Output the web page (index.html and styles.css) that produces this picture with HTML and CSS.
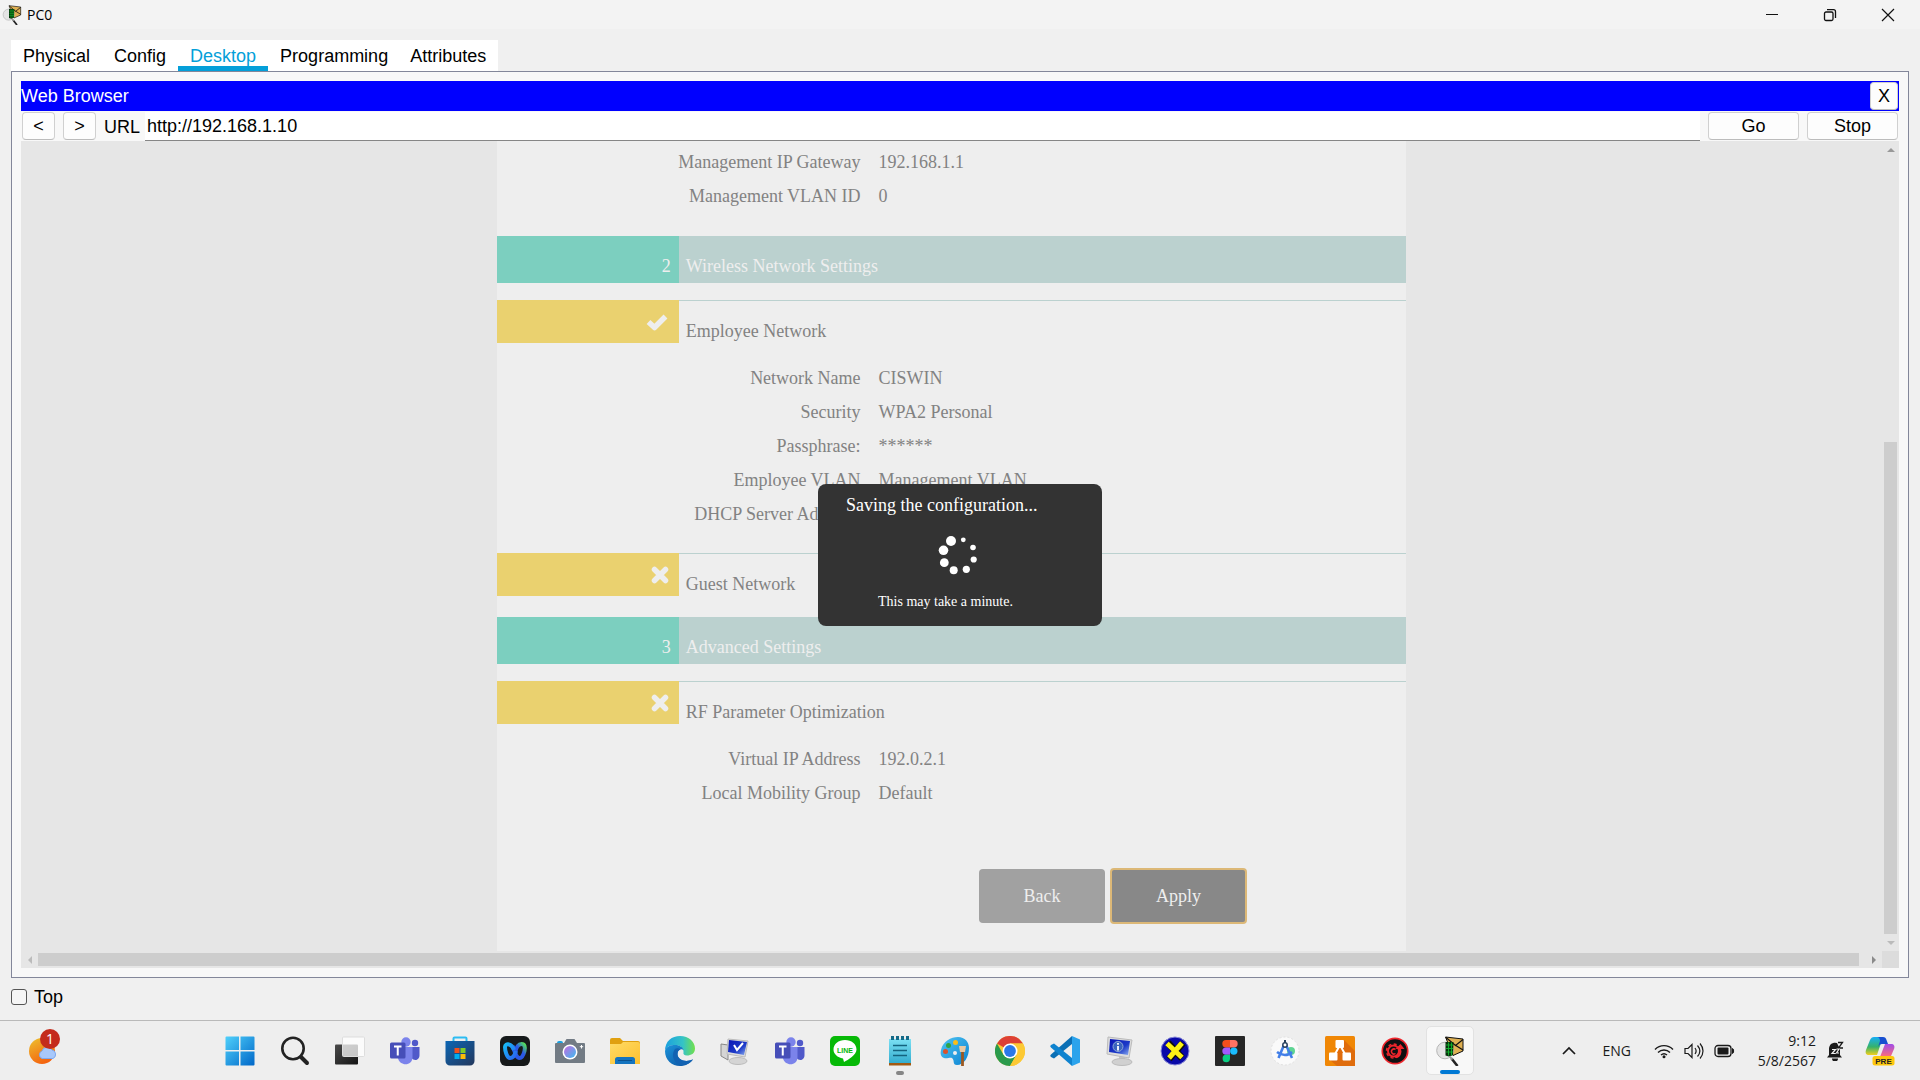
FILE: index.html
```html
<!DOCTYPE html>
<html lang="en">
<head>
<meta charset="utf-8">
<title>PC0</title>
<link rel="stylesheet" href="styles.css">
</head>
<body>
<svg class="defs" aria-hidden="true">
  <defs>
    <linearGradient id="win" x1="0" y1="0" x2="1" y2="1"><stop offset="0" stop-color="#4fd0fb"/><stop offset="1" stop-color="#0067c8"/></linearGradient>
    <linearGradient id="sun" x1="0" y1="0" x2="0.5" y2="1"><stop offset="0" stop-color="#edc22f"/><stop offset="1" stop-color="#f4640f"/></linearGradient>
    <linearGradient id="dark" x1="0" y1="0" x2="1" y2="1"><stop offset="0" stop-color="#4a4a4a"/><stop offset="1" stop-color="#141414"/></linearGradient>
    <linearGradient id="store" x1="0" y1="0" x2="1" y2="1"><stop offset="0" stop-color="#0c66b4"/><stop offset="1" stop-color="#23375c"/></linearGradient>
    <linearGradient id="webexa" x1="0" y1="0" x2="1" y2="1"><stop offset="0" stop-color="#18b8f5"/><stop offset="1" stop-color="#2a62f0"/></linearGradient>
    <linearGradient id="webexb" x1="1" y1="0" x2="0" y2="1"><stop offset="0" stop-color="#55e05a"/><stop offset="0.4" stop-color="#2a58e8"/><stop offset="1" stop-color="#2a58e8"/></linearGradient>
    <linearGradient id="lens" x1="0" y1="0" x2="1" y2="1"><stop offset="0" stop-color="#c56ae0"/><stop offset="1" stop-color="#3cbcf0"/></linearGradient>
    <linearGradient id="folder" x1="0" y1="0" x2="1" y2="1"><stop offset="0" stop-color="#ffdb66"/><stop offset="1" stop-color="#fdc02f"/></linearGradient>
    <linearGradient id="edgea" x1="0" y1="0" x2="1" y2="0"><stop offset="0" stop-color="#1aa0df"/><stop offset="0.6" stop-color="#35c3c6"/><stop offset="1" stop-color="#72e04a"/></linearGradient>
    <linearGradient id="edgeb" x1="0" y1="0" x2="1" y2="1"><stop offset="0" stop-color="#1b93da"/><stop offset="1" stop-color="#0c4f9e"/></linearGradient>
    <linearGradient id="screen" x1="0" y1="0" x2="1" y2="1"><stop offset="0" stop-color="#0a14b4"/><stop offset="0.6" stop-color="#1c3ac8"/><stop offset="1" stop-color="#8fb0f0"/></linearGradient>
    <linearGradient id="pad" x1="0" y1="0" x2="0" y2="1"><stop offset="0" stop-color="#7be0f4"/><stop offset="1" stop-color="#34add0"/></linearGradient>
    <linearGradient id="paint" x1="0" y1="0" x2="1" y2="1"><stop offset="0" stop-color="#4fc4f2"/><stop offset="1" stop-color="#0c83d2"/></linearGradient>
    <linearGradient id="copa" x1="0" y1="0" x2="0" y2="1"><stop offset="0" stop-color="#16aef5"/><stop offset="0.55" stop-color="#36b26a"/><stop offset="1" stop-color="#f3cf1c"/></linearGradient>
    <linearGradient id="copb" x1="0" y1="0" x2="0" y2="1"><stop offset="0" stop-color="#a04be8"/><stop offset="1" stop-color="#ff6f75"/></linearGradient>
    <symbol id="teams" viewBox="0 0 30 30">
      <circle cx="25" cy="7" r="3.2" fill="#5059c9"/><path d="M20 11h9.500v8c0 6-6 6-8 3z" fill="#5059c9"/>
      <circle cx="16" cy="6" r="4.700" fill="#7b83eb"/><path d="M8 11h14.500v10c0 9.500-13 9.500-14.500 1z" fill="#7b83eb"/>
      <rect x="0" y="6.500" width="15.500" height="16" rx="1.500" fill="#464eb8"/><path d="M4 10.500h7.500M7.750 10.500v9" stroke="#fff" stroke-width="2" fill="none"/>
    </symbol>
    <symbol id="tracer" viewBox="0 0 30 30">
      <path d="M10.500 1l17.500 2v12l-10 4.500z" fill="#dfb052" stroke="#111"/><path d="M11 1.500l9.500 8L28 3.500M20 9l8 5" fill="none" stroke="#111" stroke-width="1.200"/>
      <circle cx="10" cy="14.500" r="8.300" fill="#e4e4e4" stroke="#b5b5b5"/>
      <path d="M10.500 6h8l-.5 13-4 1.500-3.500-1z" fill="#05310a"/><path d="M11 9h7M11 12.500h7M11 16h7M13.500 6.500v13M16.500 6.500v13" stroke="#11b52d" stroke-width=".9"/>
      <path d="M16.500 22.500l6 7.500" stroke="#222" stroke-width="2.600"/><path d="M15 21l2.500 2.500" stroke="#999" stroke-width="2"/>
    </symbol>
    <symbol id="tick" viewBox="0 0 24 18"><path d="M3.500 9l6 5.500L20.500 3.500" fill="none" stroke="#eee" stroke-width="5.500" stroke-linejoin="round"/></symbol>
    <symbol id="cross" viewBox="0 0 18 18"><path d="M3.500 3.500l11 11M14.500 3.500l-11 11" fill="none" stroke="#eee" stroke-width="5.500" stroke-linecap="round"/></symbol>
  </defs>
</svg>

<header class="titlebar">
  <svg class="app-icon" width="20" height="20"><use href="#tracer"/></svg>
  <h1 class="title">PC0</h1>
  <div class="window-controls">
    <button type="button" aria-label="Minimize"><svg width="14" height="14" viewBox="0 0 14 14"><path d="M1 6.500h12" stroke="#111"/></svg></button>
    <button type="button" aria-label="Restore"><svg width="14" height="14" viewBox="0 0 14 14" fill="none" stroke="#111"><rect x="1.500" y="4" width="8.500" height="8.500" rx="1.500" stroke-width="1.300"/><path d="M4 1.700h6.500a2 2 0 0 1 2 2v6.300" stroke-width="1.300"/></svg></button>
    <button type="button" aria-label="Close"><svg width="14" height="14" viewBox="0 0 14 14"><path d="M1 1l12 12M13 1L1 13" stroke="#111" stroke-width="1.200"/></svg></button>
  </div>
</header>

<nav class="tabs">
  <a href="#physical">Physical</a>
  <a href="#config">Config</a>
  <a href="#desktop" class="active">Desktop</a>
  <a href="#programming">Programming</a>
  <a href="#attributes">Attributes</a>
</nav>

<main class="panel">
  <div class="browser-head"><h2>Web Browser</h2><button type="button" class="btn btn-x">X</button></div>
  <form class="toolbar">
    <button type="button" class="btn btn-nav">&lt;</button>
    <button type="button" class="btn btn-nav">&gt;</button>
    <label for="url">URL</label>
    <input id="url" type="text" value="http://192.168.1.10">
    <button type="button" class="btn btn-go">Go</button>
    <button type="button" class="btn btn-go">Stop</button>
  </form>

  <div class="viewport">
    <div class="page">
      <article class="sheet">
        <dl class="rows first">
          <dt>Management IP Gateway</dt><dd>192.168.1.1</dd>
          <dt>Management VLAN ID</dt><dd>0</dd>
        </dl>
        <h3 class="section"><span class="num">2</span><span class="name">Wireless Network Settings</span></h3>
        <h4 class="sub"><span class="mark"><svg width="24" height="18"><use href="#tick"/></svg></span><span class="name">Employee Network</span></h4>
        <dl class="rows">
          <dt>Network Name</dt><dd>CISWIN</dd>
          <dt>Security</dt><dd>WPA2 Personal</dd>
          <dt>Passphrase:</dt><dd>******</dd>
          <dt>Employee VLAN</dt><dd>Management VLAN</dd>
          <dt>DHCP Server Address:</dt><dd></dd>
        </dl>
        <h4 class="sub last"><span class="mark"><svg width="18" height="18"><use href="#cross"/></svg></span><span class="name">Guest Network</span></h4>
        <h3 class="section"><span class="num">3</span><span class="name">Advanced Settings</span></h3>
        <h4 class="sub"><span class="mark"><svg width="18" height="18"><use href="#cross"/></svg></span><span class="name">RF Parameter Optimization</span></h4>
        <dl class="rows">
          <dt>Virtual IP Address</dt><dd>192.0.2.1</dd>
          <dt>Local Mobility Group</dt><dd>Default</dd>
        </dl>
        <div class="actions">
          <button type="button" class="back">Back</button>
          <button type="button" class="apply">Apply</button>
        </div>
      </article>
    </div>
    <div class="vbar" aria-hidden="true"><i class="arrow up"></i><div class="vtrack"><div class="vthumb"></div></div><i class="arrow down"></i></div>
    <div class="hbar" aria-hidden="true"><i class="arrow left"></i><div class="hthumb"></div><i class="arrow right"></i></div>
    <div class="corner"></div>

    <div class="saving" role="status">
      <p class="saving-title">Saving the configuration...</p>
      <svg class="spinner" width="40" height="40" viewBox="0 0 40 40" fill="#fff">
        <circle cx="13" cy="6" r="5"/><circle cx="5.500" cy="15.300" r="4.800"/><circle cx="6.300" cy="27.700" r="4.400"/><circle cx="15.700" cy="35.300" r="4"/>
        <circle cx="28.300" cy="34.300" r="3.600"/><circle cx="35.700" cy="24.500" r="3.100"/><circle cx="35" cy="12.500" r="2.800"/><circle cx="25.300" cy="4.800" r="2.400"/>
      </svg>
      <p class="saving-note">This may take a minute.</p>
    </div>
  </div>
</main>

<div class="top-option"><input type="checkbox" id="top"><label for="top">Top</label></div>

<footer class="taskbar">
  <button type="button" class="widgets" aria-label="Weather">
    <svg width="34" height="36" viewBox="0 0 34 36"><circle cx="14" cy="22" r="13" fill="url(#sun)"/><path d="M14 29.500a4 4 0 0 1 0-7.500 5.500 5.500 0 0 1 10-1 4.500 4.500 0 0 1 1 8.500z" fill="#a8c8fb" stroke="#7fa8ee"/></svg>
    <span class="badge">1</span>
  </button>

  <div class="apps">
    <button type="button" aria-label="Start"><svg viewBox="0 0 30 30"><path d="M.5 1.500a1 1 0 0 1 1-1H14V14H.5zM15.500.5h13a1 1 0 0 1 1 1V14h-14zM.5 15.500H14v14H1.500a1 1 0 0 1-1-1zM15.500 15.500h14v13a1 1 0 0 1-1 1h-13z" fill="url(#win)"/></svg></button>
    <button type="button" aria-label="Search"><svg viewBox="0 0 30 30" fill="none" stroke="#222"><circle cx="13" cy="12.500" r="10.700" stroke-width="2.600"/><path d="M21 21l6 6" stroke-width="4" stroke-linecap="round"/></svg></button>
    <button type="button" aria-label="Task view"><svg viewBox="0 0 30 30"><rect x="0" y="8.500" width="23" height="20" rx="1" fill="url(#dark)"/><rect x="7.500" y="1" width="22" height="19.500" rx="1" fill="#fff" fill-opacity=".75" stroke="#ddd"/></svg></button>
    <button type="button" aria-label="Teams"><svg><use href="#teams"/></svg></button>
    <button type="button" aria-label="Store"><svg viewBox="0 0 30 30"><path d="M8.500 6V2.500a1 1 0 0 1 1-1h11a1 1 0 0 1 1 1V6" fill="none" stroke="#2cbcf2" stroke-width="2"/><path d="M.5 5h29v20a4.500 4.500 0 0 1-4.500 4.500H5A4.500 4.500 0 0 1 .5 25z" fill="url(#store)"/><path d="M9.500 12h5v5h-5z" fill="#f1511b"/><path d="M15.500 12h5v5h-5z" fill="#80cc28"/><path d="M9.500 18h5v5h-5z" fill="#00adef"/><path d="M15.500 18h5v5h-5z" fill="#fbbc09"/></svg></button>
    <button type="button" aria-label="Webex"><svg viewBox="0 0 30 30" fill="none"><rect width="30" height="30" rx="6" fill="#16191a"/><path d="M15 17c1-5 3-9 6.500-9 3 0 4 3 3 7-1 4-2.500 7-5 7-4 0-5-8-7-12" stroke="url(#webexb)" stroke-width="4"/><path d="M16 15c-1 4-3 7-6 7s-5-7-5-11c0-2 2-3 4-2.500 3 .5 4 3 5 5.500" stroke="url(#webexa)" stroke-width="4"/></svg></button>
    <button type="button" aria-label="Camera"><svg viewBox="0 0 30 30"><rect x="2" y="5" width="6" height="5" rx="2" fill="#18a0e0"/><path d="M1 7h8l2.500-4h8L22 7h7a1 1 0 0 1 1 1v18a1 1 0 0 1-1 1H1a1 1 0 0 1-1-1V8a1 1 0 0 1 1-1z" fill="#727b84"/><circle cx="15" cy="16" r="7.500" fill="#fff"/><circle cx="15" cy="16" r="6" fill="url(#lens)"/><path d="M26.500 9v3.500M24.800 10.700h3.400" stroke="#fff"/></svg></button>
    <button type="button" aria-label="File Explorer"><svg viewBox="0 0 30 30"><path d="M0 4a2 2 0 0 1 2-2h8l3 3h15a2 2 0 0 1 2 2v5H0z" fill="#e0a010"/><path d="M0 8h11l2-2h15a2 2 0 0 1 2 2v20H0z" fill="url(#folder)"/><path d="M5 28v-4.500A2.500 2.500 0 0 1 7.500 21h15a2.500 2.500 0 0 1 2.500 2.500V28z" fill="#1474bf"/><path d="M8 24.500h14" stroke="#0b528f"/></svg></button>
    <button type="button" aria-label="Edge"><svg viewBox="0 0 30 30"><path d="M0 15C0 5 7 0 15 0c9 0 15 6 15 12.500 0 5-4 7-8 7-3 0-4-1.500-3.500-3C19 12 15 9 10 9 5 9 1 11 0 15z" fill="url(#edgea)"/><path d="M0 15C1 10 6 9 10 9c4 0 8 2 8.500 5-2-1.500-6-.5-6 4 0 5 6 8 12 6.500 2-.5 3-1 3.500-1C24 28 20 30 15 30 7 30 0 24 0 15z" fill="url(#edgeb)"/><path d="M10 13c-5 7 0 15.500 7.500 16.500C22 29 26 26.500 28 23.500c-7 3-15 1-15.500-5C12.300 16 13.500 14 15.500 13.500c-2-1.500-4-1.500-5.500-.5z" fill="#1262b2"/></svg></button>
    <button type="button" aria-label="Remote display"><svg viewBox="0 0 30 30"><path d="M1 8l7 1v15l-7-4z" fill="#d5d5d5" stroke="#888"/><path d="M8 3l20 2-3 16-18-3z" fill="#ddd" stroke="#bbb"/><path d="M9 4l18 2-3 13-16-3z" fill="url(#screen)"/><path d="M14 9l3 5 6-7" stroke="#fff" stroke-width="2" fill="none"/><ellipse cx="18" cy="25" rx="9" ry="3.500" fill="#d4d4d4" stroke="#bbb"/></svg></button>
    <button type="button" aria-label="Teams chat"><svg><use href="#teams"/></svg></button>
    <button type="button" aria-label="LINE"><svg viewBox="0 0 30 30"><rect width="30" height="30" rx="5" fill="#06b907"/><path d="M15 4C8.500 4 3.500 8 3.500 13.500c0 4.500 4 8 9.500 9l1 3.500c4-2 12.500-7 12.500-12.500C26.500 8 21.500 4 15 4z" fill="#fff"/><text x="15" y="16.500" text-anchor="middle" class="line-text">LINE</text></svg></button>
    <button type="button" aria-label="Notepad" class="running"><svg viewBox="0 0 30 30"><path d="M4 3h22v24H4z" fill="url(#pad)"/><path d="M4 27h22v2.500H4z" fill="#a25a13"/><path d="M8 9.500h14M8 14.500h14M8 19.500h14" stroke="#14637f" stroke-width="1.700"/><path d="M7.500 0v4M12.500 0v4M17.500 0v4M22.500 0v4" stroke="#146a88" stroke-width="3"/></svg></button>
    <button type="button" aria-label="Paint"><svg viewBox="0 0 30 30"><path d="M1 14C3 5 11 1 18 1c7 0 11 5 11 11 0 9-5 17-12 17-5 0-2-5-5-7-2-1-5 1-8 0-3-1-4-4-3-8z" fill="url(#paint)"/><circle cx="5.500" cy="15.500" r="2.500" fill="#d9532c"/><circle cx="8.500" cy="9.500" r="2.500" fill="#2fa344"/><circle cx="15.500" cy="6.500" r="2.500" fill="#fbbd1a"/><circle cx="15" cy="17" r="2" fill="#eee"/><path d="M22.500 14v16" stroke="#9b5922" stroke-width="2.800"/><path d="M19 10h7l-1 6h-5z" fill="#e9c9a4"/></svg></button>
    <button type="button" aria-label="Chrome"><svg viewBox="0 0 30 30"><circle cx="15" cy="15" r="15" fill="#fcc934"/><path d="M15 15L2 7.500A15 15 0 0 1 28 7.500H15z" fill="#dd4035"/><path d="M2 7.500A15 15 0 0 0 15 30l6.500-11.200-13 0z" fill="#2a9a4c"/><path d="M15 7.500h13A15 15 0 0 1 15 30l6.500-11.200z" fill="#fcc934"/><circle cx="15" cy="15" r="7.500" fill="#fff"/><circle cx="15" cy="15" r="5.900" fill="#2b78e8"/></svg></button>
    <button type="button" aria-label="Visual Studio Code"><svg viewBox="0 0 30 30"><path d="M22 0l8 3.500v23L22 30z" fill="#2ba3ec"/><path d="M22 0v8L4 22.500 1 21c-1-1-1-1.500 0-2.500z" fill="#0a6fb5"/><path d="M22 30v-8L4 7.500 1 9c-1 1-1 1.500 0 2.500z" fill="#0f83cf"/></svg></button>
    <button type="button" aria-label="System information"><svg viewBox="0 0 30 30"><path d="M14 20h6v6h-6z" fill="#c5c5c5"/><ellipse cx="17" cy="26" rx="10" ry="3.500" fill="#d0d0d0" stroke="#bbb"/><path d="M3 1l24 3-3 18-22-4z" fill="#ddd" stroke="#bbb"/><path d="M5 3l20 2-2 14-19-3z" fill="url(#screen)"/><circle cx="13" cy="10.500" r="5" fill="#3b65bd" stroke="#8ea8d8"/><path d="M13 7v1.800M13 10v4.500" stroke="#fff" stroke-width="1.800"/></svg></button>
    <button type="button" aria-label="X tool"><svg viewBox="0 0 30 30"><circle cx="15" cy="15" r="14" fill="#0909a8" stroke="#8a8ad8"/><path d="M8 7l14 15M23 7L9 23" stroke="#111" stroke-width="7"/><path d="M7 7.500l15 14M22 7L9 22" stroke="#fbf116" stroke-width="5"/></svg></button>
    <button type="button" aria-label="Figma"><svg viewBox="0 0 30 30"><rect width="30" height="30" rx="1" fill="#262626"/><path d="M15 4h-4a3.700 3.700 0 0 0 0 7.400h4z" fill="#f24e1e"/><path d="M15 4h4a3.700 3.700 0 0 1 0 7.400h-4z" fill="#ff7262"/><path d="M15 11.400h-4a3.700 3.700 0 0 0 0 7.400h4z" fill="#a259ff"/><circle cx="18.800" cy="15.100" r="3.700" fill="#1abcfe"/><path d="M15 18.800h-4a3.700 3.700 0 1 0 4 3.700z" fill="#0acf83"/></svg></button>
    <button type="button" aria-label="Android Studio"><svg viewBox="0 0 30 30"><circle cx="15" cy="15" r="14" fill="#fafafa" stroke="#e0e0e0" stroke-dasharray="2 2"/><circle cx="21" cy="15" r="4" fill="#5ed493"/><path d="M14 9L8.500 22M16 9l6 13M7 16c5 4 11 4 15 0" stroke="#427fe8" stroke-width="2.600" fill="none"/><circle cx="15" cy="9" r="2.200" fill="#fff" stroke="#28405c" stroke-width="1.500"/><path d="M15 4v3" stroke="#28405c" stroke-width="2"/></svg></button>
    <button type="button" aria-label="Diagrams"><svg viewBox="0 0 30 30"><rect width="30" height="30" rx="1.500" fill="#f08705"/><path d="M19 4l11 11v15H12l-7-6 9-12z" fill="#df6c0c"/><path d="M15 9L9 20M15 9l6 11" stroke="#fff" stroke-width="2"/><g fill="#fff"><rect x="10.500" y="4" width="8.500" height="8" rx="1"/><rect x="4" y="16.500" width="8.500" height="8" rx="1"/><rect x="17.500" y="16.500" width="8.500" height="8" rx="1"/></g></svg></button>
    <button type="button" aria-label="Control center"><svg viewBox="0 0 30 30"><circle cx="15" cy="15" r="12.700" fill="#101112" stroke="#f0262d" stroke-width="1.700"/><circle cx="13.500" cy="15" r="5.500" fill="none" stroke="#f0262d" stroke-width="2"/><circle cx="13.500" cy="15" r="7" fill="none" stroke="#f0262d" stroke-width="1.500" stroke-dasharray="3 2.500"/><path d="M15.500 13.500a2.500 2.500 0 1 0 0 4" fill="none" stroke="#f0262d" stroke-width="1.500"/><path d="M15 22c6 0 7-5 6-9l3.500 0-4-5-5 5h3c1 4 0 6-3 7z" fill="#f0262d"/></svg></button>
    <button type="button" aria-label="Packet Tracer" class="current"><svg><use href="#tracer"/></svg></button>
  </div>

  <div class="tray">
    <button type="button" aria-label="Show hidden icons"><svg width="16" height="10" viewBox="0 0 16 10"><path d="M2 8l6-6 6 6" fill="none" stroke="#1a1a1a" stroke-width="1.700"/></svg></button>
    <span class="lang">ENG</span>
    <div class="status">
      <svg width="20" height="16" viewBox="0 0 20 16" fill="none" stroke="#1a1a1a" stroke-width="1.400" aria-label="Wi-Fi"><path d="M1 6.500a12.500 12.500 0 0 1 18 0M4 9.500a8.500 8.500 0 0 1 12 0M7 12a4.500 4.500 0 0 1 6 0"/><circle cx="10" cy="13.700" r="1.500" fill="#1a1a1a" stroke="none"/></svg>
      <svg width="20" height="18" viewBox="0 0 20 18" fill="none" stroke="#1a1a1a" stroke-width="1.200" aria-label="Volume"><path d="M1 6.500h3L8 2.500v13l-4-4H1z"/><path d="M11 6c1.500 2 1.500 4 0 6M13.500 3.500c3 3.500 3 7.500 0 11M16 1.500c4 4.500 4 10.500 0 15"/></svg>
      <svg width="21" height="14" viewBox="0 0 21 14" aria-label="Battery"><rect x="1" y="1.500" width="16" height="11" rx="3" fill="none" stroke="#1a1a1a" stroke-width="1.300"/><rect x="3.500" y="3.500" width="11" height="7" rx="1" fill="#1a1a1a"/><path d="M18.500 4.500c1.500 0 1.500 5 0 5z" fill="#1a1a1a" stroke="#1a1a1a"/></svg>
    </div>
    <div class="clock"><time>9:12</time><time>5/8/2567</time></div>
    <svg class="bell" width="18" height="20" viewBox="0 0 18 20" fill="#1a1a1a" aria-label="Notifications"><path d="M2 14V8a6 6 0 0 1 8-6l3 6v6l2 2.500H0z"/><path d="M5 17.500h6a3 3 0 0 1-6 0z"/><path d="M11 1.500h4.500L11.500 7H16" fill="none" stroke="#1a1a1a" stroke-width="1.300"/><path d="M5 8.500h3.500L5 12.500h3.700M9.500 8h2.500l-2.500 4H12" fill="none" stroke="#eee" stroke-width="1.200"/></svg>
    <button type="button" class="copilot" aria-label="Copilot"><svg width="30" height="30" viewBox="0 0 30 30"><path d="M9 1h9l-6 18H4c-3 0-4-2-3-5L5 4c1-2 2-3 4-3z" fill="url(#copa)"/><path d="M12 1h6c2 0 3 1 3.500 3L23 8h-6c-2 0-3 1-4 3l2-6c0-2-1-4-3-4z" fill="#174fd0"/><path d="M20 8h6c3 0 4 2 3 5l-3 7-11 1z" fill="url(#copb)"/><rect x="7.500" y="20" width="22" height="9.500" rx="2.500" fill="#fdc70c"/><text x="18.500" y="28" text-anchor="middle" class="pre-text">PRE</text></svg></button>
  </div>
</footer>
</body>
</html>
```

FILE: styles.css
```css
* { box-sizing: border-box; }

body {
  margin: 0;
  min-height: 100vh;
  display: flex;
  flex-direction: column;
  background: #f0f0f0;
  color: #000;
  font-family: "Liberation Sans", Arial, sans-serif;
  font-size: 18px;
  line-height: 20px;
}

h1, h2, h3, h4, p, dl, dd { margin: 0; font-weight: normal; }
h1, h2, h3, h4 { font-size: inherit; }
button, input { font: inherit; color: inherit; margin: 0; padding: 0; }
button { border: 0; background: none; }
svg { display: block; }
.defs { position: absolute; width: 0; height: 0; }

/* Window title bar */
.titlebar {
  display: flex;
  align-items: center;
  height: 29px;
  padding-left: 2px;
  background: #f3f3f3;
}
.title {
  margin-left: 5px;
  font-family: "Open Sans", "Noto Sans", sans-serif;
  font-size: 14px;
}
.window-controls { display: flex; margin-left: auto; padding-right: 3px; }
.window-controls button {
  display: flex;
  align-items: center;
  justify-content: center;
  width: 58px;
  height: 28px;
}

/* Tabs */
.tabs {
  display: flex;
  align-self: flex-start;
  height: 31px;
  margin: 11px 11px 0;
  background: #fff;
}
.tabs a {
  padding: 6px 12px 0;
  border-bottom: 5px solid transparent;
  color: #000;
  text-decoration: none;
}
.tabs a:last-child { padding-left: 10px; }
.tabs .active { color: #049fd9; border-bottom-color: #049fd9; }

/* Desktop panel */
.panel {
  flex: 1;
  display: flex;
  flex-direction: column;
  margin: 0 11px;
  padding: 9px;
  border: 1px solid #83879a;
  background: #f8f8f8;
}
.browser-head {
  display: flex;
  align-items: center;
  justify-content: space-between;
  height: 30px;
  padding-right: 1px;
  background: #00f;
  color: #fff;
}
.btn {
  height: 28px;
  border: 1px solid #d0d0d0;
  border-bottom-color: #bcbcbc;
  border-radius: 4px;
  background: #fdfdfd;
  color: #000;
}
.btn-x { width: 28px; }
.btn-nav { width: 33px; margin-right: 8px; }
.btn-go { width: 91px; margin-left: 8px; }
.toolbar {
  display: flex;
  align-items: center;
  height: 30px;
  padding: 0 1px;
}
.toolbar label { padding-top: 1px; }
.toolbar input {
  flex: 1;
  min-width: 0;
  height: 29px;
  margin-left: 5px;
  padding: 2px 2px 0;
  border: 0;
  border-bottom: 1px solid #868686;
  background: #fff;
  outline: 0;
}

/* Web page area with scroll bars */
.viewport {
  position: relative;
  flex: 1;
  display: grid;
  grid-template-columns: 1fr 17px;
  grid-template-rows: 1fr 17px;
  background: #e6e6e6;
}
.page {
  display: flex;
  justify-content: center;
  font-family: "Liberation Serif", "Times New Roman", serif;
  color: #828282;
}
.sheet {
  width: 909px;
  padding: 4px 0 27px;
  background: #eee;
}
.rows {
  display: grid;
  grid-template-columns: 40% 1fr;
  column-gap: 18px;
  grid-auto-rows: 34px;
  margin: 18px 0 22px;
  line-height: 34px;
}
.rows.first { margin: 0 0 23px; }
.rows dt { text-align: right; }
.section, .sub {
  display: grid;
  grid-template-columns: 20% 1fr;
}
.section {
  height: 47px;
  margin-bottom: 17px;
  background: #bbd1cf;
  color: #eee;
}
.section .num {
  padding: 20px 8px 0;
  background: #7ccfbf;
  text-align: right;
}
.section .name { padding: 20px 7px 0; }
.sub { height: 43px; }
.sub.last { margin-bottom: 21px; }
.sub .mark {
  display: flex;
  justify-content: flex-end;
  padding: 13px 10px 0;
  background: #ead16f;
}
.sub .name { padding: 20px 7px 0; border-top: 1px solid #bbd1cf; white-space: nowrap; }
.actions {
  display: flex;
  align-items: center;
  justify-content: flex-end;
  gap: 5px;
  margin-top: 58px;
  padding-right: 159px;
  color: #eee;
}
.back { width: 126px; height: 54px; border-radius: 4px; background: #a1a1a1; }
.apply {
  width: 137px;
  height: 56px;
  border: 2px solid #dcb877;
  border-radius: 4px;
  background: #888;
}

.vbar {
  display: flex;
  flex-direction: column;
  align-items: center;
}
.vtrack {
  flex: 1;
  display: flex;
  flex-direction: column;
  justify-content: flex-end;
}
.vthumb { width: 13px; height: 63.4%; background: #cdcdcd; }
.hbar { display: flex; align-items: center; }
.hthumb { flex: 1; height: 13px; margin-right: 6px; background: #cdcdcd; }
.corner { background: #dcdcdc; }
.arrow {
  flex: none;
  width: 17px;
  height: 17px;
  display: flex;
  align-items: center;
  justify-content: center;
}
.arrow::before { content: ""; border: 4px solid transparent; }
.up::before { border-bottom-color: #999; border-top: 0; }
.down::before { border-top-color: #bbb; border-bottom: 0; }
.left::before { border-right-color: #bbb; border-left: 0; }
.right::before { border-left-color: #8a8a8a; border-right: 0; }

/* Progress dialog over the page */
.saving {
  position: absolute;
  top: 343px;
  left: 50%;
  width: 284px;
  height: 142px;
  margin-left: -142px;
  padding: 11px 28px;
  border-radius: 8px;
  background: #333;
  color: #fff;
  font-family: "Liberation Serif", "Times New Roman", serif;
}
.spinner { margin: 20px 0 0 92px; }
.saving-note { margin: 17px 0 0 32px; font-size: 14px; }

/* Option under the panel */
.top-option {
  display: flex;
  align-items: center;
  gap: 7px;
  height: 42px;
  padding: 0 11px 4px;
}
.top-option input {
  appearance: none;
  width: 16px;
  height: 16px;
  border: 1px solid #555;
  border-radius: 3px;
  background: #f5f5f5;
}

/* Taskbar */
.taskbar {
  display: flex;
  align-items: center;
  height: 60px;
  padding: 0 25px 0 28px;
  border-top: 1px solid #b9b9b9;
  background: #eee;
  font-family: "Open Sans", "Noto Sans", sans-serif;
  font-size: 14px;
}
.widgets { position: relative; width: 184px; padding-bottom: 8px; }
.badge {
  position: absolute;
  top: 0;
  left: 12px;
  width: 20px;
  height: 20px;
  border-radius: 50%;
  background: #c42b1c;
  color: #fff;
}
.apps { display: flex; }
.apps button {
  position: relative;
  display: flex;
  align-items: center;
  justify-content: center;
  width: 55px;
  height: 49px;
}
.apps svg { width: 30px; height: 30px; }
.apps .running::after, .apps .current::after {
  content: "";
  position: absolute;
  bottom: 0;
  left: 24px;
  width: 8px;
  height: 4px;
  border-radius: 2px;
  background: #868686;
}
.apps .current {
  width: 48px;
  margin: 0 4px;
  border: 1px solid #e2e2e2;
  border-radius: 5px;
  background: #f8f8f8;
}
.apps .current::after { left: 13px; width: 20px; background: #0078d4; }
.line-text { font-family: "Liberation Sans", sans-serif; font-size: 7px; font-weight: bold; fill: #06b907; }
.pre-text { font-family: "Liberation Sans", sans-serif; font-size: 8px; font-weight: bold; fill: #222; }
.tray { display: flex; align-items: center; margin-left: auto; color: #1a1a1a; }
.lang { margin: 0 23px 0 26px; }
.status { display: flex; align-items: center; gap: 10px; }
.clock { display: flex; flex-direction: column; width: 81px; text-align: right; }
.bell { margin: 0 20px 0 11px; }
```
